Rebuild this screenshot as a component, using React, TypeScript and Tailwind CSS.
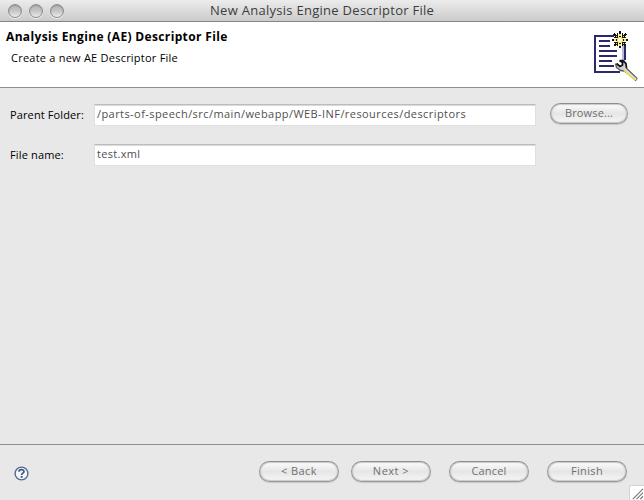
import React from "react";

function TrafficLight() {
  return (
    <span className="block size-[14px] rounded-full border border-[#8c8c8c] bg-linear-to-b from-[#b4b4b4] via-[#c6c6c6] to-[#ebebeb] shadow-[0_1px_0_#eeeeee,inset_0_1px_1px_#999999]" />
  );
}

function PushButton({ label, track, className = "" }: { label: string; track: string; className?: string }) {
  return (
    <button
      className={`flex h-[21px] shrink-0 items-center justify-center rounded-full border border-[#999999] border-t-[#8f8f8f] bg-linear-to-b from-[#f8f8f8] from-10% via-[#e6e6e6] via-50% to-[#f6f6f6] pb-[2px] text-[11px] leading-none text-[#707070] shadow-[0_1px_1px_#c8c8c8,inset_0_0_1px_1px_#c9c9c9] ${className}`}
    >
      <span className={`whitespace-pre ${track}`}>{label}</span>
    </button>
  );
}

function Field({ value, track }: { value: string; track: string }) {
  return (
    <div className="flex h-[22px] w-[442px] items-center border border-[#e0e0e0] border-t-[#bcbcbc] bg-white pb-[3px] pl-[2px] text-[11px] leading-none text-[#505050] shadow-[inset_0_1px_0_#dadada]">
      <span className={`whitespace-pre ${track}`}>{value}</span>
    </div>
  );
}

function WizardIcon() {
  return (
    <svg width="46" height="52" viewBox="0 0 46 52" shapeRendering="crispEdges">
      <path d="M30 15h3v16h-3z" fill="#b8b8dc" />
      <path d="M3 6h27v35H3z" fill="#fff" />
      <path d="M2 5h20v2H4v34h24v2H2zM32 16h2v14h-2z" fill="#29296b" />
      <path d="M7 10h11v2H7zM7 15h11v2H7zM7 20h18v2H7zM7 25h18v2H7zM7 30h13v2H7zM7 35h15v2H7z" fill="#29296b" />
      <path d="M22 4l12 12M34 4L22 16" stroke="#15150f" strokeWidth="2.500" />
      <path d="M27 1h2v17h-2zM20 9h16v2H20zM25 3h1v13h-1zM30 3h1v13h-1zM22 7h12v1H22zM22 12h12v1H22z" fill="#15150f" />
      <path d="M26 7h4v1h1v4h-1v1h-4v-1h-1V8h1zM27 4h2v2h-2zM27 14h2v2h-2zM22 9h2v2h-2zM32 9h2v2h-2zM24 6h1v1h-1zM31 6h1v1h-1zM24 13h1v1h-1zM31 13h1v1h-1z" fill="#ffe05a" />
      <path d="M27 8h2v4h-2zM26 9h4v2h-4z" fill="#fffbd8" />
      <g shapeRendering="auto" strokeLinejoin="round">
        <path
          d="M27.500 30.500L31 31l3 3 .5 5L45 48.500 43 51 32 41l-4-.5-4-3.500v-3l3.500 2.500 3-1.500v-2z"
          fill="#cfcfd4"
        />
        <path d="M23.500 33.500l1 4 4 3 4 .5 2 2" fill="none" stroke="#55555c" strokeWidth="1.300" />
        <path d="M27.500 30.500l3 2v2.500l-2.500 1.500-3.500-3M27.500 30.500l3.500.2 3 3 .5 4.500" fill="none" stroke="#111" strokeWidth="1.700" />
        <path d="M32 40l11 10" stroke="#e5dc4f" strokeWidth="2" />
        <path d="M34 38l11 10.500" stroke="#55555c" strokeWidth="1.600" />
        <path d="M32 38L44 49" stroke="#dcdce0" strokeWidth="1.500" />
        <path d="M43 51l2.500-2" stroke="#666" />
      </g>
    </svg>
  );
}

function HelpIcon() {
  return (
    <svg width="15" height="15" viewBox="0 0 15 15" fill="none">
      <circle cx="7.500" cy="7.500" r="6.400" fill="#f3f7fa" stroke="#536b8f" strokeWidth="1.400" />
      <path d="M5 5.700C5 3 10 3 10 5.500c0 1.600-2.400 1.600-2.400 3.400" stroke="#3d5579" strokeWidth="1.700" />
      <path d="M6.700 10h1.900v1.800H6.700z" fill="#3d5579" />
    </svg>
  );
}

export default function App() {
  return (
    <div className="flex h-[500px] w-[644px] flex-col overflow-hidden bg-[#e8e8e8] font-['Open_Sans','Noto_Sans',sans-serif] text-black">
      <header className="flex h-[22px] shrink-0 items-center rounded-t-[4px] border-b border-[#858585] bg-linear-to-b from-[#ececec] to-[#cbcbcb] pl-2">
        <div className="flex w-[202px] gap-[7px]">
          <TrafficLight />
          <TrafficLight />
          <TrafficLight />
        </div>
        <h1 className="whitespace-nowrap text-[13px] leading-none tracking-[0.28px] text-[#3d3d3d]">New Analysis Engine Descriptor File</h1>
      </header>
      <section className="flex h-[66px] shrink-0 justify-between border-b border-[#8e8e8e] bg-white pl-[6px]">
        <div className="flex flex-col pt-[7px]">
          <h2 className="whitespace-nowrap text-[12px] leading-4 font-bold tracking-[0.35px]">Analysis Engine (AE) Descriptor File</h2>
          <p className="mt-[5px] ml-[5px] whitespace-nowrap text-[11px] leading-4 tracking-[0.23px]">Create a new AE Descriptor File</p>
        </div>
        <div className="w-[52px] pt-2">
          <WizardIcon />
        </div>
      </section>
      <main className="flex grow flex-col gap-[18px] pt-[16px] pl-[10px] text-[11px]">
        <div className="flex h-[22px] items-center">
          <label className="w-[84px] pb-[2px] whitespace-nowrap leading-none tracking-[0.12px]">Parent Folder:</label>
          <Field value="/parts-of-speech/src/main/webapp/WEB-INF/resources/descriptors" track="tracking-[0.43px]" />
          <PushButton label="Browse..." track="tracking-[0.15px]" className="mb-[3px] ml-[14px] w-[78px]" />
        </div>
        <div className="flex h-[22px] items-center">
          <label className="w-[84px] pb-[2px] whitespace-nowrap leading-none tracking-[0.15px]">File name:</label>
          <Field value="test.xml" track="tracking-[0.3px]" />
        </div>
      </main>
      <footer className="flex h-[56px] shrink-0 border-t border-[#8e8e8e] pl-[14px]">
        <div className="flex w-[245px] pt-[21px]">
          <HelpIcon />
        </div>
        <div className="flex pt-4">
          <PushButton label="< Back" track="tracking-[0.4px]" className="w-[80px]" />
          <PushButton label="Next >" track="tracking-[0.5px]" className="ml-3 w-[80px]" />
          <PushButton label="Cancel" track="tracking-[0.2px]" className="ml-[18px] w-[80px]" />
          <PushButton label="Finish" track="tracking-[0.35px]" className="ml-[18px] w-[80px]" />
        </div>
        <svg width="15" height="15" viewBox="0 0 15 15" className="ml-[2px] self-end border-t border-l border-[#d5d5d5] bg-white">
          <path d="M3 14L14 3M7 14l7-7M11 14l3-3" stroke="#777" strokeWidth="1.200" />
        </svg>
      </footer>
    </div>
  );
}
